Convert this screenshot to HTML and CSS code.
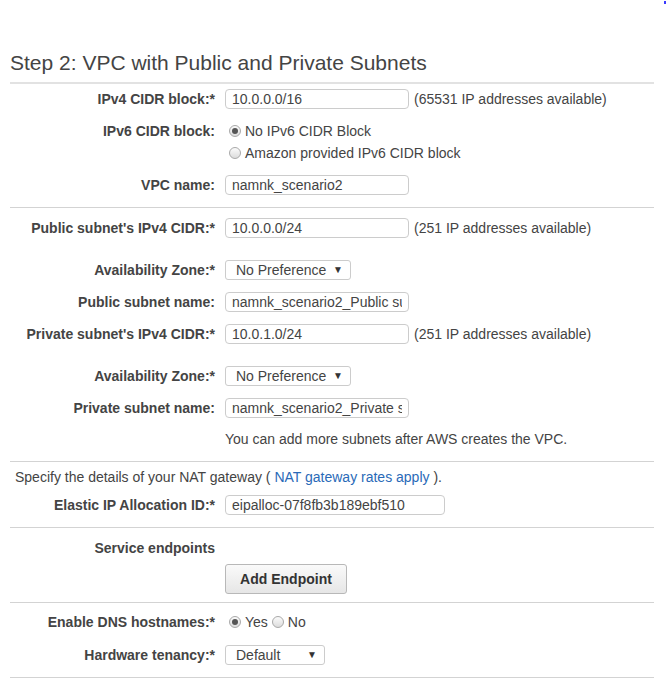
FILE: index.html
```html
<!DOCTYPE html>
<html lang="en">
<head>
<meta charset="utf-8">
<title>Step 2: VPC with Public and Private Subnets</title>
<link rel="stylesheet" href="styles.css">
</head>
<body>
<span class="corner-dot"></span>
<div class="page">
  <h1 class="title">Step 2: VPC with Public and Private Subnets</h1>

  <div class="section section-vpc">
    <div class="row">
      <label class="label">IPv4 CIDR block:*</label>
      <div class="field"><input class="input" type="text" value="10.0.0.0/16"><span class="hint">(65531 IP addresses available)</span></div>
    </div>
    <div class="row row-radios">
      <label class="label label-tall">IPv6 CIDR block:</label>
      <div class="radio-group">
        <div class="radio-line"><span class="radio checked"></span>No IPv6 CIDR Block</div>
        <div class="radio-line"><span class="radio"></span>Amazon provided IPv6 CIDR block</div>
      </div>
    </div>
    <div class="row">
      <label class="label">VPC name:</label>
      <div class="field"><input class="input" type="text" value="namnk_scenario2"></div>
    </div>
  </div>

  <div class="section section-subnets">
    <div class="row row-extra">
      <label class="label">Public subnet's IPv4 CIDR:*</label>
      <div class="field"><input class="input" type="text" value="10.0.0.0/24"><span class="hint">(251 IP addresses available)</span></div>
    </div>
    <div class="row">
      <label class="label">Availability Zone:*</label>
      <div class="field"><div class="select select-az"><span>No Preference</span><span class="arrow">&#9660;</span></div></div>
    </div>
    <div class="row">
      <label class="label">Public subnet name:</label>
      <div class="field"><input class="input" type="text" value="namnk_scenario2_Public subnet"></div>
    </div>
    <div class="row row-extra">
      <label class="label">Private subnet's IPv4 CIDR:*</label>
      <div class="field"><input class="input" type="text" value="10.0.1.0/24"><span class="hint">(251 IP addresses available)</span></div>
    </div>
    <div class="row">
      <label class="label">Availability Zone:*</label>
      <div class="field"><div class="select select-az"><span>No Preference</span><span class="arrow">&#9660;</span></div></div>
    </div>
    <div class="row">
      <label class="label">Private subnet name:</label>
      <div class="field"><input class="input" type="text" value="namnk_scenario2_Private subnet"></div>
    </div>
    <div class="row">
      <span class="label"></span>
      <div class="note">You can add more subnets after AWS creates the VPC.</div>
    </div>
  </div>

  <div class="section section-nat">
    <p class="nat-text">Specify the details of your NAT gateway ( <a class="link" href="#">NAT gateway rates apply</a> ).</p>
    <div class="row">
      <label class="label">Elastic IP Allocation ID:*</label>
      <div class="field"><input class="input input-wide" type="text" value="eipalloc-07f8fb3b189ebf510"></div>
    </div>
  </div>

  <div class="section section-endpoints">
    <div class="row-plain row-service">
      <span class="label">Service endpoints</span>
      <span></span>
    </div>
    <div class="row-plain">
      <span></span>
      <div class="field"><button class="button" type="button">Add Endpoint</button></div>
    </div>
  </div>

  <div class="section section-dns">
    <div class="row">
      <label class="label label-tall">Enable DNS hostnames:*</label>
      <div class="radio-line"><span class="radio checked"></span>Yes<span class="radio radio-next"></span>No</div>
    </div>
    <div class="row">
      <label class="label">Hardware tenancy:*</label>
      <div class="field"><div class="select select-tenancy"><span>Default</span><span class="arrow">&#9660;</span></div></div>
    </div>
  </div>
</div>
</body>
</html>
```

FILE: styles.css
```css
html, body {
  margin: 0;
  padding: 0;
  background: #ffffff;
}

body {
  font-family: "Liberation Sans", Arial, sans-serif;
  font-size: 14px;
  color: #444444;
  position: relative;
}

.corner-dot {
  position: absolute;
  top: 1px;
  left: 664px;
  width: 2px;
  height: 3px;
  background: #3a3aff;
}

.page {
  width: 644px;
  padding-left: 10px;
}

.title {
  margin: 0;
  padding: 51px 0 7px;
  font-size: 21px;
  line-height: 24px;
  font-weight: normal;
  color: #444444;
  border-bottom: 2px solid #e2e2e2;
}

.section {
  border-top: 1px solid #d3d3d3;
}

.section-vpc {
  border-top: none;
  padding: 0 0 5px;
}

.section-subnets {
  padding: 5px 0 6px;
}

.section-nat {
  padding: 0 0 5px;
}

.section-endpoints {
  padding: 11px 0 8px;
}

.section-dns {
  padding: 3px 0 5px;
  border-bottom: 1px solid #d3d3d3;
}

.row,
.row-plain {
  display: grid;
  grid-template-columns: 205px 1fr;
  column-gap: 10px;
  align-items: center;
}

.row {
  padding: 5px 0 7px;
}

.row-extra {
  padding-bottom: 17px;
}

.row-radios {
  align-items: start;
  padding: 4px 0 6px;
}

.row-service {
  margin-bottom: 7px;
}

.label {
  text-align: right;
  font-weight: bold;
  line-height: 18px;
  color: #444444;
  white-space: nowrap;
}

.label-tall {
  line-height: 22px;
}

.field {
  display: flex;
  align-items: center;
  height: 20px;
}

.row-plain .field {
  height: auto;
}

.input {
  box-sizing: border-box;
  width: 184px;
  height: 20px;
  margin: 0;
  padding: 0 6px;
  border: 1px solid #cccccc;
  border-radius: 4px;
  background: #ffffff;
  font-family: "Liberation Sans", Arial, sans-serif;
  font-size: 14px;
  color: #444444;
  outline: none;
}

.input-wide {
  width: 220px;
}

.hint {
  margin-left: 5px;
  line-height: 18px;
  white-space: nowrap;
}

.select {
  box-sizing: border-box;
  display: flex;
  align-items: center;
  justify-content: space-between;
  height: 20px;
  padding: 0 7px 0 10px;
  border: 1px solid #cccccc;
  border-radius: 3px;
  background: #ffffff;
  font-size: 14px;
  line-height: 18px;
  color: #444444;
}

.select-az {
  width: 126px;
}

.select-tenancy {
  width: 100px;
}

.arrow {
  font-size: 10px;
  line-height: 10px;
  color: #333333;
}

.radio-group {
  display: flex;
  flex-direction: column;
}

.radio-line {
  display: flex;
  align-items: center;
  height: 22px;
  line-height: 22px;
  white-space: nowrap;
}

.radio {
  box-sizing: border-box;
  position: relative;
  display: inline-block;
  width: 12px;
  height: 12px;
  margin: 0 4px 0 4px;
  border: 1px solid #a9a9a9;
  border-radius: 50%;
  background: linear-gradient(#fbfbfb, #dcdcdc);
}

.radio-next {
  margin-left: 4px;
}

.radio.checked::after {
  content: "";
  position: absolute;
  left: 2px;
  top: 2px;
  width: 6px;
  height: 6px;
  border-radius: 50%;
  background: #555555;
}

.note {
  line-height: 18px;
  white-space: nowrap;
}

.nat-text {
  margin: 0;
  padding: 6px 0 4px 5px;
  line-height: 18px;
}

.link {
  color: #2a6ab8;
  text-decoration: none;
}

.button {
  box-sizing: border-box;
  width: 122px;
  height: 30px;
  margin: 0;
  padding: 0;
  border: 1px solid #b8b8b8;
  border-radius: 3px;
  background: linear-gradient(#fafafa, #e6e6e6);
  font-family: "Liberation Sans", Arial, sans-serif;
  font-size: 14px;
  font-weight: bold;
  color: #333333;
}
```
